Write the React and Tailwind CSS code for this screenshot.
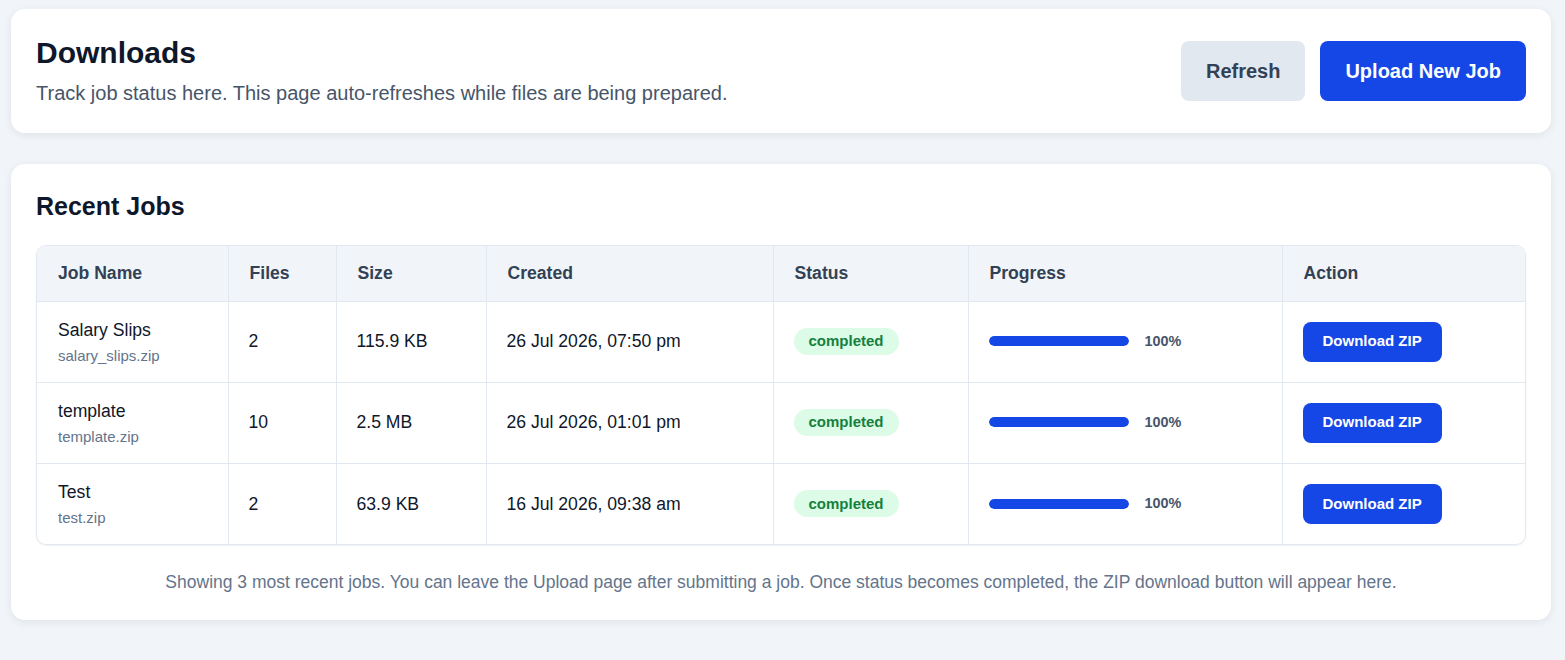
import React from 'react';

const jobs = [
    { name: 'Salary Slips', file: 'salary_slips.zip', files: 2, size: '115.9 KB', created: '26 Jul 2026, 07:50 pm', status: 'completed', progress: 100 },
    { name: 'template', file: 'template.zip', files: 10, size: '2.5 MB', created: '26 Jul 2026, 01:01 pm', status: 'completed', progress: 100 },
    { name: 'Test', file: 'test.zip', files: 2, size: '63.9 KB', created: '16 Jul 2026, 09:38 am', status: 'completed', progress: 100 },
];

const columns = [
    { label: 'Job Name', width: 191 },
    { label: 'Files', width: 108 },
    { label: 'Size', width: 150 },
    { label: 'Created', width: 287 },
    { label: 'Status', width: 195 },
    { label: 'Progress', width: 314 },
    { label: 'Action', width: 243 },
];

const App = () => {
    return (
        <div className="min-h-screen bg-[#f1f5f9] pl-[11px] pr-[14px] pt-[9px] pb-10 font-['Liberation_Sans',Arial,sans-serif]">

            {/* header card */}
            <div className="bg-white rounded-[14px] shadow-[0_2px_8px_rgba(15,23,42,0.08)] px-[25px] pt-[26px] pb-[26px] flex items-center justify-between">
                <div>
                    <h1 className="text-[30px] leading-[36px] font-bold text-[#0f172a]">Downloads</h1>
                    <p className="mt-[8px] text-[20px] leading-[28px] text-[#475569]">
                        Track job status here. This page auto-refreshes while files are being prepared.
                    </p>
                </div>
                <div className="flex items-center gap-[15px]">
                    <button className="h-[60px] px-[25px] rounded-lg bg-[#e2e8f0] text-[#334155] text-[20px] font-bold">
                        Refresh
                    </button>
                    <button className="h-[60px] px-[25px] rounded-lg bg-[#1447e6] text-white text-[20px] font-bold">
                        Upload New Job
                    </button>
                </div>
            </div>

            {/* jobs card */}
            <div className="mt-[31px] bg-white rounded-[14px] shadow-[0_2px_8px_rgba(15,23,42,0.08)] px-[25px] pt-[27px] pb-[26px]">
                <h2 className="text-[25px] leading-[30px] font-bold text-[#0f172a]">Recent Jobs</h2>

                <div className="mt-[24px] border border-[#e2e8f0] rounded-[10px] overflow-hidden shadow-[0_1px_2px_rgba(15,23,42,0.06)]">
                    <table className="w-full table-fixed border-collapse">
                        <colgroup>
                            {columns.map((c) => (
                                <col key={c.label} style={{ width: c.width }} />
                            ))}
                        </colgroup>
                        <thead>
                            <tr className="bg-[#f1f5f9] h-[55px]">
                                {columns.map((c, i) => (
                                    <th
                                        key={c.label}
                                        className={`text-left pl-[21px] pr-[20px] text-[17.6px] font-bold text-[#334155] border-b border-[#e2e8f0] ${i > 0 ? 'border-l' : ''}`}
                                    >
                                        {c.label}
                                    </th>
                                ))}
                            </tr>
                        </thead>
                        <tbody>
                            {jobs.map((job, idx) => (
                                <tr key={job.name} className={`h-[81px] ${idx < jobs.length - 1 ? 'border-b border-[#e2e8f0]' : ''}`}>
                                    <td className="pl-[21px] pr-[20px] align-middle">
                                        <div className="text-[17.6px] leading-[22px] text-[#0f172a]">{job.name}</div>
                                        <div className="mt-[6px] text-[15px] leading-[18px] text-[#64748b]">{job.file}</div>
                                    </td>
                                    <td className="px-[20px] border-l border-[#e2e8f0] text-[17.6px] text-[#0f172a]">{job.files}</td>
                                    <td className="px-[20px] border-l border-[#e2e8f0] text-[17.6px] text-[#0f172a]">{job.size}</td>
                                    <td className="px-[20px] border-l border-[#e2e8f0] text-[17.6px] text-[#0f172a]">{job.created}</td>
                                    <td className="px-[20px] border-l border-[#e2e8f0]">
                                        <span className="inline-flex items-center h-[27px] px-[15px] rounded-full bg-[#dcfce7] text-[#15803d] text-[15px] font-bold">
                                            {job.status}
                                        </span>
                                    </td>
                                    <td className="px-[20px] border-l border-[#e2e8f0]">
                                        <div className="flex items-center gap-[16px]">
                                            <div className="w-[140px] h-[10px] rounded-full bg-[#e2e8f0] overflow-hidden">
                                                <div className="h-full rounded-full bg-[#1447e6]" style={{ width: `${job.progress}%` }} />
                                            </div>
                                            <span className="text-[14.4px] font-bold text-[#475569]">{job.progress}%</span>
                                        </div>
                                    </td>
                                    <td className="px-[20px] border-l border-[#e2e8f0]">
                                        <button className="h-[40px] px-[20px] rounded-lg bg-[#1447e6] text-white text-[15px] font-bold">
                                            Download ZIP
                                        </button>
                                    </td>
                                </tr>
                            ))}
                        </tbody>
                    </table>
                </div>

                <p className="mt-[25px] text-center text-[17.5px] leading-[24px] text-[#64748b]">
                    Showing 3 most recent jobs. You can leave the Upload page after submitting a job. Once status becomes completed, the ZIP download button will appear here.
                </p>
            </div>
        </div>
    );
};

export default App;
